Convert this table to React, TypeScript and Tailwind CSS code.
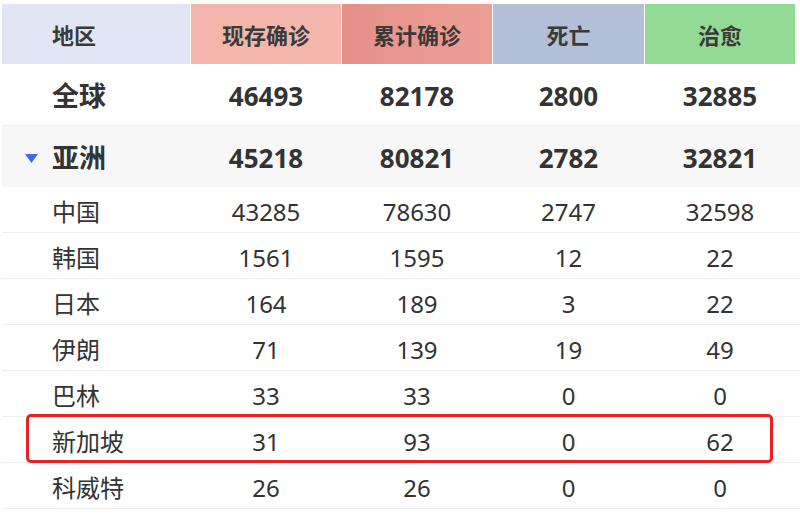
const FONT = "[font-family:'Noto_Sans','Noto_Sans_CJK_SC',sans-serif]"

type Row = { name: string; now: number; total: number; dead: number; cured: number }

const ROWS: Row[] = [
  { name: '中国', now: 43285, total: 78630, dead: 2747, cured: 32598 },
  { name: '韩国', now: 1561, total: 1595, dead: 12, cured: 22 },
  { name: '日本', now: 164, total: 189, dead: 3, cured: 22 },
  { name: '伊朗', now: 71, total: 139, dead: 19, cured: 49 },
  { name: '巴林', now: 33, total: 33, dead: 0, cured: 0 },
  { name: '新加坡', now: 31, total: 93, dead: 0, cured: 62 },
  { name: '科威特', now: 26, total: 26, dead: 0, cured: 0 },
]

const COLS = 'grid grid-cols-[188px_150px_150px_151px_150px] gap-x-px'

function Cells({ row }: { row: Row }) {
  return (
    <>
      <div className="flex items-center justify-center">{row.now}</div>
      <div className="flex items-center justify-center">{row.total}</div>
      <div className="flex items-center justify-center">{row.dead}</div>
      <div className="flex items-center justify-center">{row.cured}</div>
    </>
  )
}

export default function App() {
  return (
    <div className={`w-[800px] h-[520px] bg-white text-[#333] overflow-hidden ${FONT}`}>
      <div className="pt-[4px] pl-[2px]">
        {/* header */}
        <div className={`${COLS} h-[60px] text-[22px] font-bold text-[#3a3a3a]`}>
          <div className="flex items-center pl-[50px] pt-[2px] bg-[#e2e6f4]">地区</div>
          <div className="flex items-center justify-center pt-[2px] bg-[#f2b6ac]">现存确诊</div>
          <div className="flex items-center justify-center pt-[2px] bg-gradient-to-r from-[#e5908a] to-[#ec9f95]">累计确诊</div>
          <div className="flex items-center justify-center pt-[2px] bg-[#b2bfd7]">死亡</div>
          <div className="flex items-center justify-center pt-[2px] bg-[#92da95]">治愈</div>
        </div>

        {/* global */}
        <div className={`${COLS} h-[62px] pt-[3px] border-b border-[#eeeeee] text-[26px] font-bold`}>
          <div className="flex items-center pl-[50px] text-[27px]">全球</div>
          <Cells row={{ name: '全球', now: 46493, total: 82178, dead: 2800, cured: 32885 }} />
        </div>

        {/* asia */}
        <div className={`${COLS} h-[61px] pt-[3px] bg-[#f7f7f7] text-[26px] font-bold`}>
          <div className="flex items-center pl-[22px] gap-[13px] text-[27px]">
            <svg width="15" height="11" viewBox="0 0 15 11">
              <path d="M1 1 L14 1 L7.5 10 Z" fill="#4468e2" />
            </svg>
            亚洲
          </div>
          <Cells row={{ name: '亚洲', now: 45218, total: 80821, dead: 2782, cured: 32821 }} />
        </div>

        {ROWS.map((row) => (
          <div key={row.name} className={`${COLS} relative h-[46px] pt-[4px] border-b border-[#eeeeee] text-[24px]`}>
            <div className="flex items-center pl-[50px]">{row.name}</div>
            <Cells row={row} />
            {row.name === '新加坡' && (
              <div className="absolute left-[24px] top-[-3px] w-[747px] h-[49px] rounded-[5px] border-[3px] border-[#e62222]" />
            )}
          </div>
        ))}
      </div>
    </div>
  )
}
